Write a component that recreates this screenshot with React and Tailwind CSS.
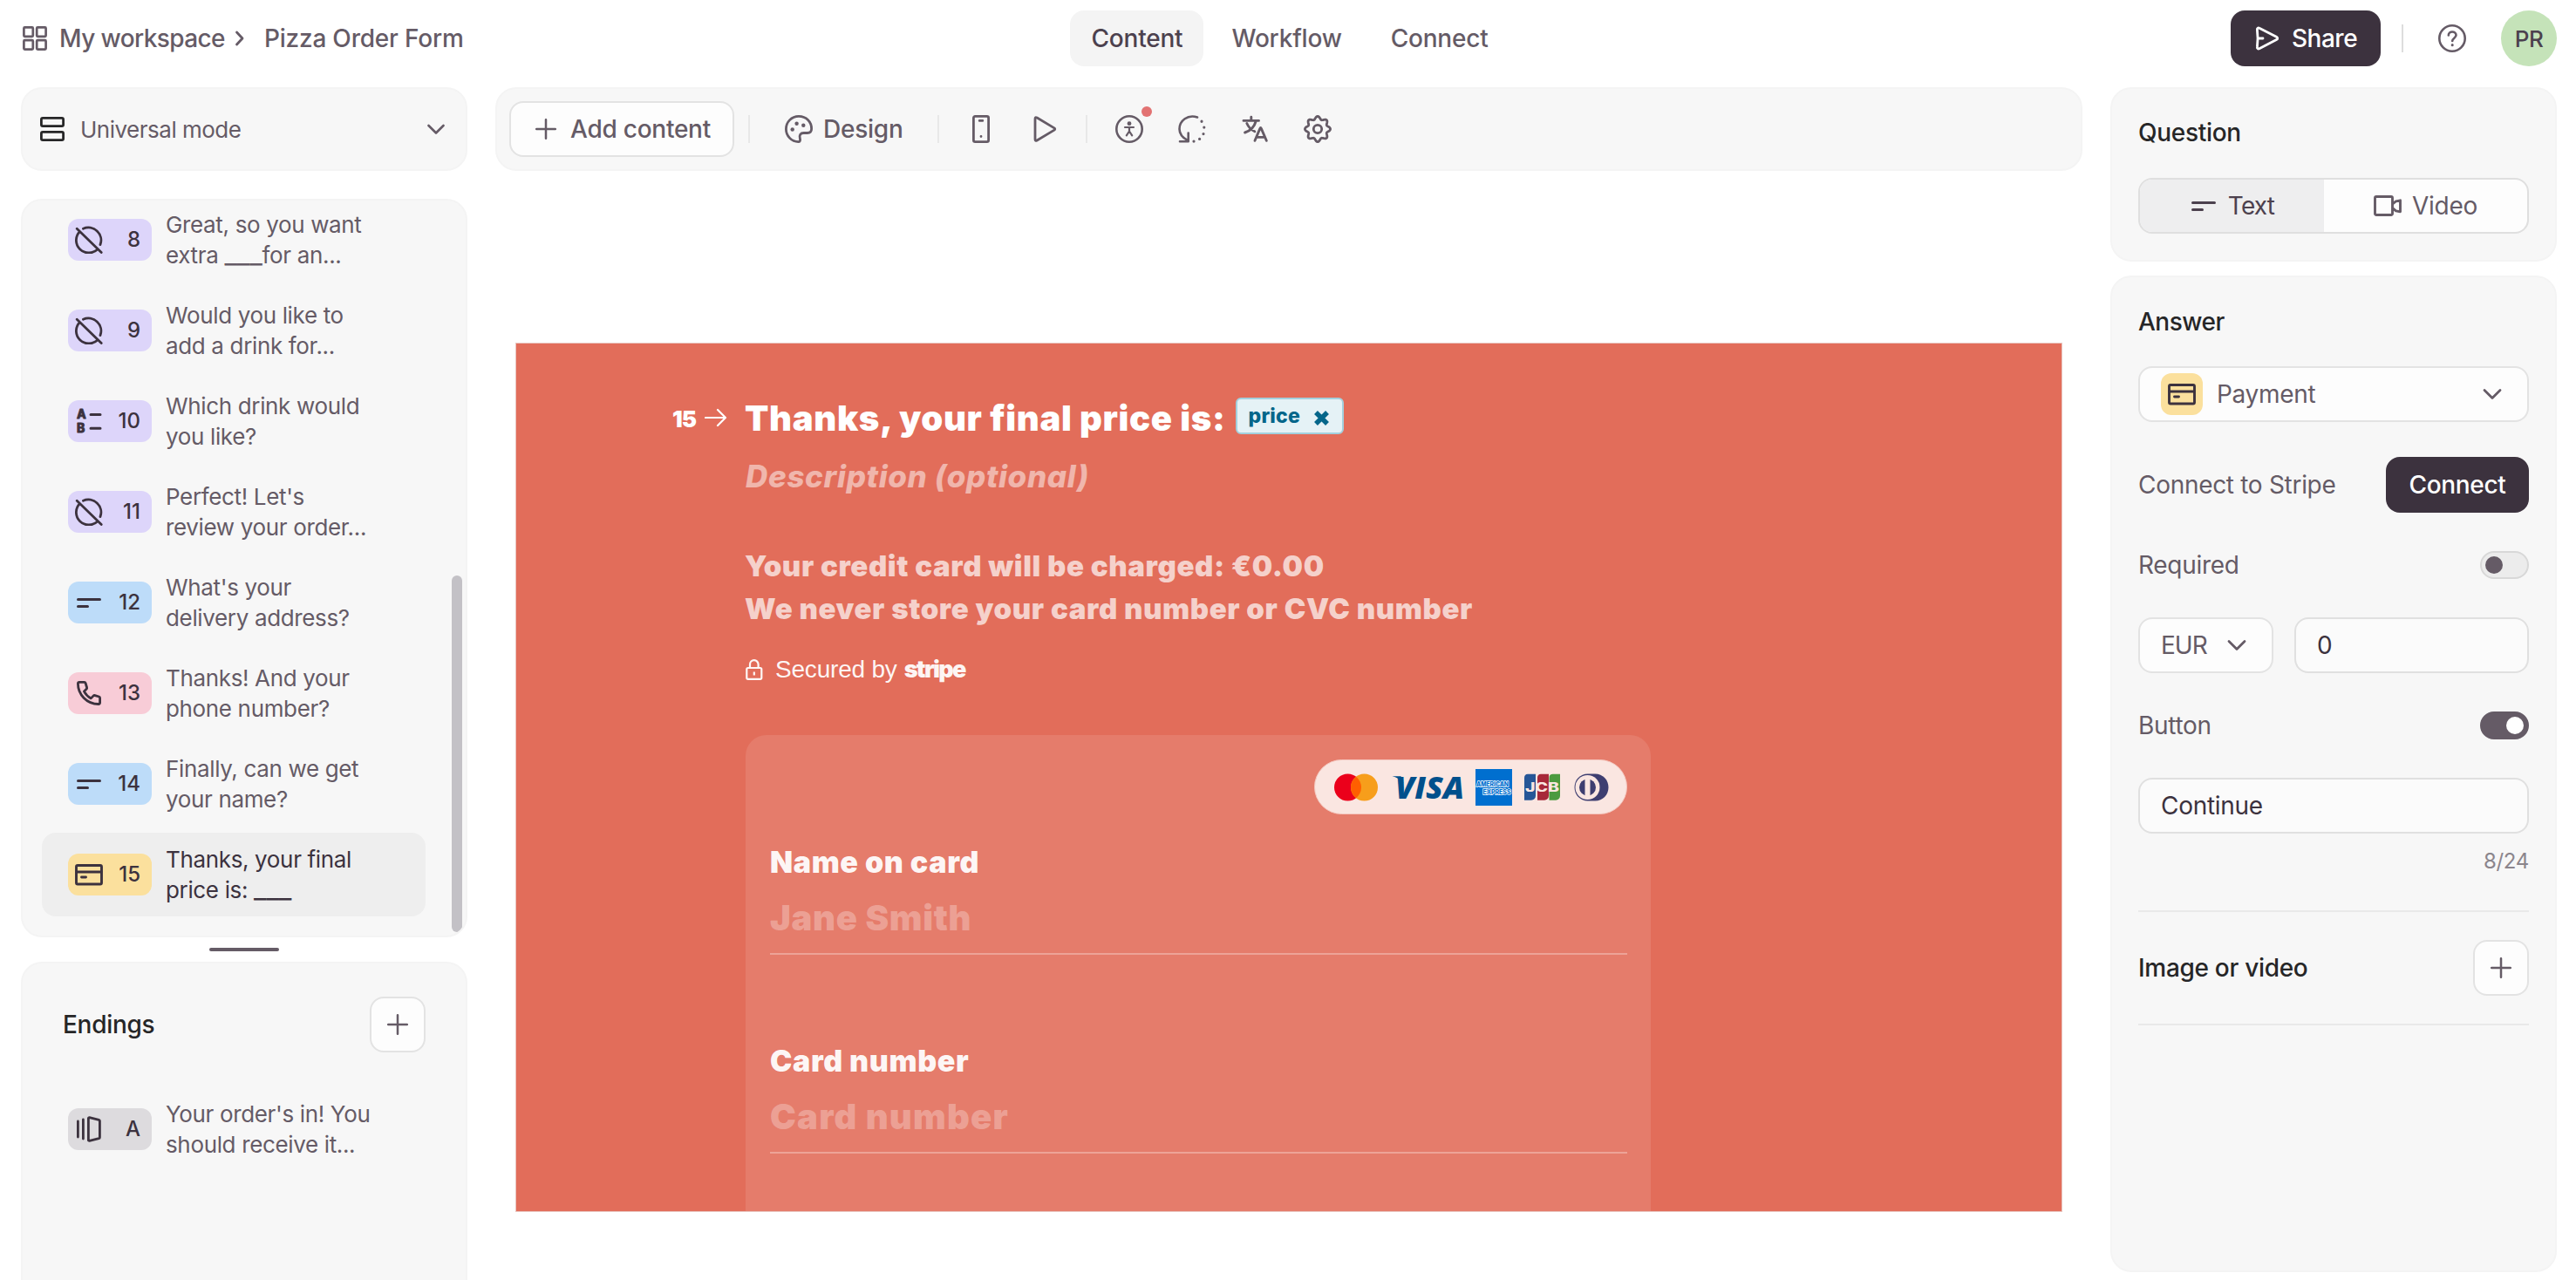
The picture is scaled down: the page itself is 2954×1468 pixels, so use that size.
import React, { useState } from "react";

const Icon = ({ size = 32, className = "", children, width = 2.6 }) => (
  <svg
    width={size}
    height={size}
    viewBox={`0 0 ${size} ${size}`}
    fill="none"
    stroke="currentColor"
    strokeWidth={width}
    strokeLinecap="round"
    strokeLinejoin="round"
    className={"shrink-0 " + className}
  >
    {children}
  </svg>
);

const GridIcon = () => (
  <Icon size={28} width={2.7}>
    <rect x="1.4" y="1.4" width="10.4" height="10.4" rx="1" />
    <rect x="16.2" y="1.4" width="10.4" height="10.4" rx="1" />
    <rect x="1.4" y="16.2" width="10.4" height="10.4" rx="1" />
    <rect x="16.2" y="16.2" width="10.4" height="10.4" rx="1" />
  </Icon>
);

const RowsIcon = () => (
  <Icon size={28} width={2.8} className="text-[#262627]">
    <rect x="1.4" y="1.4" width="25.2" height="9.2" rx="1.6" />
    <rect x="1.4" y="17.4" width="25.2" height="9.2" rx="1.6" />
  </Icon>
);

const ChevronDown = () => (
  <Icon size={28} width={2.8}>
    <path d="M5 9.5l9 9 9-9" />
  </Icon>
);

const PlusIcon = () => (
  <Icon size={24} width={2.5}>
    <path d="M12 1.2v21.6M1.2 12h21.6" />
  </Icon>
);

const StatementIcon = () => (
  <Icon width={2.8}>
    <path d="M2.2 3.2l28 27.2M9.4 3.2A14.6 14.6 0 0 1 29 21.6M5.6 6.4A14.4 14.4 0 0 0 26 26.8" />
  </Icon>
);

const ChoiceIcon = () => (
  <Icon width={3}>
    <g fill="currentColor" stroke="currentColor" strokeWidth="0.8" fontSize="14" fontWeight="800" fontFamily="Inter, sans-serif">
      <text x="2" y="13">A</text>
      <text x="2" y="29">B</text>
    </g>
    <path d="M18 8.4h11M18 24.2h11" />
  </Icon>
);

const TextIcon = () => (
  <Icon width={3}>
    <path d="M3.5 12.5h25M3.5 20.5h11" />
  </Icon>
);

const PhoneIcon = () => (
  <Icon width={2.8}>
    <path d="M5 3.4h5.6c.9 0 1.3.4 1.5 1.1l1.5 5c.2.8 0 1.3-.5 1.8l-2.7 2.6c1.8 3.5 4.3 6.1 7.9 8l2.7-2.8c.6-.6 1.1-.7 1.9-.5l4.600 1.400c.800.300 1.100.800 1.100 1.600v5.200c0 1-.700 1.700-1.700 1.700C13.600 28.500 3.400 17.500 3.400 5c0-.900.600-1.600 1.600-1.600z" />
  </Icon>
);

const CardIcon = () => (
  <Icon width={2.9}>
    <rect x="1.500" y="5.500" width="29" height="21.500" rx="1.500" />
    <path d="M2 13h28M7.500 19h5" />
  </Icon>
);

const EndingIcon = () => (
  <Icon width={2.8}>
    <path d="M3.400 7v18M9.400 5v22M15.400 3.600c0-.800.500-1 1.200-.900l10.800 2.600c.700.200 1 .600 1 1.300v18.800c0 .700-.300 1.100-1 1.300l-10.800 2.600c-.700.100-1.200-.100-1.200-.900z" />
  </Icon>
);

const gearPath =
  Array.from({ length: 97 }, (_, i) => {
    const a = (i / 96) * Math.PI * 2 - Math.PI / 2;
    const r = 12.9 + 1.7 * Math.cos(8 * (a + Math.PI / 2));
    return `${i ? "L" : "M"}${(16 + r * Math.cos(a)).toFixed(2)} ${(16 + r * Math.sin(a)).toFixed(2)}`;
  }).join("") + "Z";

const Separator = ({ className = "bg-[#e8e8e8]" }) => <div className={"h-8 w-[2px] " + className} />;

const SquareButton = () => (
  <button className="flex size-16 items-center justify-center rounded-2xl border-2 border-[#e3e3e3] bg-[#fdfdfd]">
    <PlusIcon />
  </button>
);

// recalled answers show up as a blank in the question title
const Blank = () => <span className="text-[32px] leading-none tracking-[-0.2px]">___</span>;

const tints = {
  purple: "bg-[#ddd5fa]",
  blue: "bg-[#bddcf9]",
  pink: "bg-[#f8ccd7]",
  yellow: "bg-[#fbe09d]",
  grey: "bg-[#dddbde]",
};

const questions = [
  { id: 8, icon: StatementIcon, tint: "purple", lines: ["Great, so you want", <>extra <Blank />for an...</>] },
  { id: 9, icon: StatementIcon, tint: "purple", lines: ["Would you like to", "add a drink for..."] },
  { id: 10, icon: ChoiceIcon, tint: "purple", lines: ["Which drink would", "you like?"] },
  { id: 11, icon: StatementIcon, tint: "purple", lines: ["Perfect! Let's", "review your order..."] },
  { id: 12, icon: TextIcon, tint: "blue", lines: ["What's your", "delivery address?"] },
  { id: 13, icon: PhoneIcon, tint: "pink", lines: ["Thanks! And your", "phone number?"] },
  { id: 14, icon: TextIcon, tint: "blue", lines: ["Finally, can we get", "your name?"] },
  { id: 15, icon: CardIcon, tint: "yellow", lines: ["Thanks, your final", <>price is: <Blank /></>] },
];

const QuestionRow = ({ item, active, onClick }) => {
  const RowIcon = item.icon;
  return (
    <div
      onClick={onClick}
      className={
        "flex h-24 w-[440px] shrink-0 cursor-pointer items-center rounded-2xl pl-[30px] " +
        (active ? "bg-[#eeeeee] text-[#3c323e]" : "")
      }
    >
      <div className={"flex h-12 w-24 items-center justify-between rounded-xl pr-[13px] pl-2 text-[#3c323e] " + tints[item.tint]}>
        <RowIcon />
        <span className="text-[24px] font-medium">{item.id}</span>
      </div>
      <div className="ml-4 text-[26px] leading-[35px] tracking-[-0.35px]">
        <p className="h-[35px]">{item.lines[0]}</p>
        <p className="h-[35px]">{item.lines[1]}</p>
      </div>
    </div>
  );
};

const Header = () => (
  <header className="grid h-[88px] shrink-0 grid-cols-[1fr_auto_1fr] items-center pr-[22px] pl-[26px] text-[28px] font-medium tracking-[-0.2px]">
    <div className="flex items-center">
      <GridIcon />
      <span className="ml-[14px] tracking-[-0.6px]">My workspace</span>
      <Icon size={20} width={2.8} className="ml-[7px]">
        <path d="M6.500 3l6.500 7-6.500 7" />
      </Icon>
      <span className="ml-[18px]">Pizza Order Form</span>
    </div>
    <nav className="flex gap-2">
      <span className="flex h-16 items-center rounded-2xl bg-[#f4f4f4] px-6 text-[#4c414e]">Content</span>
      <span className="flex h-16 items-center px-6">Workflow</span>
      <span className="flex h-16 items-center px-6">Connect</span>
    </nav>
    <div className="flex items-center justify-end">
      <button className="flex h-16 w-[172px] items-center rounded-2xl bg-[#3c323e] pl-7 text-white">
        <Icon size={28} width={2.8}>
          <path d="M2.400 4.200c-.300-1.800 1-2.700 2.500-1.900l19.600 9.900c1.600.800 1.600 2.600 0 3.400L4.900 25.700c-1.500.800-2.800-.100-2.500-1.900.900-6.600.900-13 0-19.600zM4 14h5" />
        </Icon>
        <span className="ml-[14px] tracking-[-0.5px]">Share</span>
      </button>
      <Separator className="ml-6 bg-[#dddddd]" />
      <Icon className="ml-10">
        <circle cx="16" cy="16" r="14.700" />
        <path d="M11.800 12.500c0-5.400 8.700-5.200 8.700-.200 0 3.300-4.300 3.400-4.300 6.700" />
        <path d="M16.200 23.600v.200" strokeWidth="3" />
      </Icon>
      <div className="ml-10 flex size-16 items-center justify-center rounded-full bg-[#c5e3b9] text-[26px] tracking-[-0.6px] text-[#4c414e]">
        PR
      </div>
    </div>
  </header>
);

const Toolbar = () => (
  <div className="flex h-24 shrink-0 items-center rounded-3xl border-2 border-[#f4f4f4] bg-[#f7f7f7] px-[14px] text-[28px] font-medium tracking-[-0.25px]">
    <button className="flex h-16 w-[258px] items-center rounded-2xl border-2 border-[#e3e3e3] bg-[#fdfdfd] pl-7">
      <PlusIcon />
      <span className="ml-4">Add content</span>
    </button>
    <Separator className="ml-4 bg-[#e8e8e8]" />
    <div className="ml-10 flex w-[135px] items-center">
      <Icon width={2.8}>
        <path d="M16 1.400C7.700 1.400 1.400 7.800 1.400 16S8 30.600 15.400 30.600c2 0 2.500-1.700 2-3.400-1.200-4 .500-6.700 4.300-6.700h4.200c3 0 4.700-1.600 4.700-4.700C30.600 7.600 24.500 1.400 16 1.400z" />
        <g fill="currentColor" stroke="none">
          <circle cx="8.700" cy="16.500" r="2.200" />
          <circle cx="13.600" cy="9.800" r="2.200" />
          <circle cx="21.300" cy="11.800" r="2.200" />
        </g>
      </Icon>
      <span className="ml-3">Design</span>
    </div>
    <Separator className="ml-10 bg-[#e8e8e8]" />
    <Icon className="ml-8" width={2.8}>
      <rect x="7.400" y="1.400" width="17.200" height="29.200" rx="1.800" />
      <path d="M14.200 6.400h3.600M16 24.500v.100" />
    </Icon>
    <Icon className="ml-[42px]" width={2.8}>
      <path d="M4 4.200q0-2.500 2.200-1.200L26 14.900q1.500 1.100 0 2.200L6.200 29Q4 30.300 4 27.800z" />
    </Icon>
    <Separator className="ml-[30px] bg-[#e8e8e8]" />
    <div className="relative ml-8">
      <Icon>
        <circle cx="16" cy="16" r="14.700" />
        <circle cx="16" cy="9.700" r="2.400" fill="currentColor" stroke="none" />
        <path d="M11 14h10M16 14.500v4.500M16 18.500l-3.200 4.900M16 18.500l3.200 4.900" strokeWidth="2.200" />
      </Icon>
      <span className="absolute -top-[10px] left-[30px] size-3 rounded-full bg-[#e27272]" />
    </div>
    <Icon className="ml-10">
      <path d="M22 2.500C11-1.200 1.500 6.500 1.500 16c0 5 2.600 9.400 9.500 13.200M2 30.200h9.700V20.500" />
      <path d="M27 7.200v.100M29.800 14v.100M29 21.500v.100M24.600 27.300v.100M18 30v.100" strokeWidth="3.200" />
    </Icon>
    <Icon className="ml-10" width={2.9}>
      <path d="M3 6.400h17.500M11.800 2.200v4M17.200 7C15.500 13 11 18 4.600 20M6.800 9.500c1.800 4 5 7.500 9 9.300M16 29.300l6-14.200c.300-.800.900-.800 1.200 0L29.300 29.300M18.500 25.400h8.500" />
    </Icon>
    <Icon className="ml-10" width={2.8}>
      <path d={gearPath} />
      <circle cx="16" cy="16" r="4.700" />
    </Icon>
  </div>
);

const CardBrands = () => (
  <div className="flex h-[63px] w-[359px] items-center rounded-full border border-[#f4c8c0] bg-[#fae6e1] pl-[22px]">
    <svg width="50" height="32" viewBox="0 0 50 32" className="shrink-0">
      <circle cx="15.500" cy="16" r="15.500" fill="#eb001b" />
      <circle cx="34.500" cy="16" r="15.500" fill="#f79e1b" />
      <path d="M25 3.750a15.500 15.500 0 0 1 0 24.500 15.500 15.500 0 0 1 0-24.500z" fill="#ff5f00" />
    </svg>
    <svg width="82" height="50" viewBox="0 -9 82 50" className="ml-4 shrink-0 overflow-visible">
      <path d="M.5 3.300h10l3 8C10 7 5 4.300.500 3.300z" fill="#00508c" />
      <text
        x="4"
        y="28.500"
        textLength="79"
        lengthAdjust="spacingAndGlyphs"
        fill="#00508c"
        fontFamily="Open Sans, sans-serif"
        fontStyle="italic"
        fontWeight="800"
        fontSize="35"
      >
        VISA
      </text>
    </svg>
    <svg width="42" height="42" viewBox="0 0 42 42" className="ml-[14px] shrink-0 overflow-visible">
      <rect width="42" height="42" fill="#006fcf" />
      <g fill="#006fcf" stroke="#fff" strokeWidth="1.500" paintOrder="stroke" fontFamily="Inter, sans-serif" fontWeight="800" fontSize="7.500">
        <text x="1" y="20" textLength="37" lengthAdjust="spacingAndGlyphs">AMERICAN</text>
        <text x="8.500" y="28.600" textLength="32" lengthAdjust="spacingAndGlyphs">EXPRESS</text>
      </g>
    </svg>
    <svg width="41" height="32" viewBox="0 0 41 32" className="ml-[14px] shrink-0">
      <path d="M4 .800h9v25a5 5 0 0 1-5 5H0V5a4.200 4.200 0 0 1 4-4.200z" fill="#265697" />
      <path d="M19 .800h9v25a5 5 0 0 1-5 5h-8V5a4.200 4.200 0 0 1 4-4.200z" fill="#a72839" />
      <path d="M32.500.800H41v25a5 5 0 0 1-5 5h-7.500V5a4.200 4.200 0 0 1 4-4.200z" fill="#4c9a3f" />
      <text x="1" y="21" textLength="39" lengthAdjust="spacingAndGlyphs" fill="#fae6e1" fontFamily="Inter, sans-serif" fontWeight="800" fontSize="14">
        JCB
      </text>
    </svg>
    <svg width="40" height="32" viewBox="0 0 40 32" className="ml-4 shrink-0">
      <path d="M15.700.500h8.500C33 .500 39.500 7.500 39.500 16S33 31.500 24.200 31.500h-8.500C7 31.500.500 24.500.500 16S7 .500 15.700.500z" fill="#3e3e70" />
      <circle cx="15.500" cy="16" r="14" fill="#fae6e1" />
      <circle cx="15.500" cy="16" r="9.500" fill="#3e3e70" />
      <rect x="12.500" y="5.500" width="6" height="21" fill="#fae6e1" />
    </svg>
  </div>
);

const Canvas = () => (
  <div className="mt-[197px] ml-[23px] flex h-[997px] w-[1774px] flex-col overflow-hidden border border-[#e9c5bf] bg-[#e26d5a] text-white">
    <div className="mt-[62px] flex h-12 shrink-0 items-center pl-[179px]">
      <div className="flex w-[83px] items-center">
        <span className="w-[37px] text-[26px] font-black tracking-[-1px]">15</span>
        <Icon size={26} width={2.2} className="-mt-[3px]">
          <path d="M1 13h23M15 4l9 9-9 9" />
        </Icon>
      </div>
      <h1 className="text-[40px] font-black tracking-[0.65px]">Thanks, your final price is:</h1>
      <div className="ml-[11px] flex h-[42px] w-[124px] items-center self-start rounded-md border-2 border-[#a3d0dd] bg-[#e5f2f6] pl-[13px] text-[#04668a]">
        <span className="w-[75px] text-[23px] leading-none font-extrabold tracking-[0.2px]">price</span>
        <svg width="17" height="17" viewBox="0 0 17 17" stroke="currentColor" strokeWidth="5.500" className="mt-[5px]">
          <path d="M2 2l13 13M15 2L2 15" />
        </svg>
      </div>
    </div>
    <div className="flex min-h-0 flex-1 flex-col pl-[263px]">
      <p className="mt-[18px] h-12 text-[35px] leading-[48px] font-extrabold tracking-[0.65px] text-white/50 italic">
        Description (optional)
      </p>
      <p className="-ml-px mt-[55px] text-[33px] leading-[49px] font-black tracking-[0.6px] text-white/70">
        Your credit card will be charged: €0.00
        <br />
        We never store your card number or CVC number
      </p>
      <div className="mt-[29px] flex h-8 items-center text-white/95">
        <svg width="20" height="24" viewBox="0 0 20 24" fill="none" stroke="currentColor" strokeWidth="2.200">
          <rect x="1.300" y="10" width="17" height="12.800" rx="1.500" />
          <path d="M5 10V6a4.800 4.800 0 0 1 9.600 0v4M9.800 14.500v4" />
        </svg>
        <span className="ml-[14px] font-['Liberation_Sans',sans-serif] text-[28px] tracking-[-0.2px]">Secured by</span>
        <span className="ml-2 text-[27px] font-black tracking-[-1.7px]">stripe</span>
      </div>
      <div className="mt-[59px] flex min-h-0 w-[1038px] flex-1 flex-col rounded-t-3xl bg-white/10 pt-[28px] pr-[27px] pl-7">
        <div className="flex justify-end">
          <CardBrands />
        </div>
        <p className="mt-[35px] text-[34px] leading-[40px] font-black tracking-[0.6px] text-white/95">Name on card</p>
        <p className="mt-[20px] h-[66px] shrink-0 border-b-2 border-white/30 text-[40px] leading-[48px] font-black tracking-[0.7px] text-white/30">
          Jane Smith
        </p>
        <p className="mt-[102px] text-[34px] leading-[40px] font-black tracking-[0.6px] text-white/95">Card number</p>
        <p className="mt-[20px] h-[66px] shrink-0 border-b-2 border-white/30 text-[40px] leading-[48px] font-black tracking-[1.2px] text-white/30">
          Card number
        </p>
      </div>
    </div>
  </div>
);

const Toggle = ({ on, onClick }) => (
  <button
    onClick={onClick}
    className={
      "flex h-8 w-14 items-center rounded-full border-2 px-[4px] " +
      (on ? "justify-end border-[#655b66] bg-[#655b66]" : "border-[#d8d8d8] bg-[#ececec]")
    }
  >
    <span className={"size-5 rounded-full " + (on ? "bg-white" : "bg-[#655b66]")} />
  </button>
);

const Settings = () => {
  const [required, setRequired] = useState(false);
  const [button, setButton] = useState(true);
  return (
    <aside className="flex w-[512px] shrink-0 flex-col gap-4 pb-[9px] text-[28px] tracking-[-0.3px]">
      <section className="h-[200px] shrink-0 rounded-3xl border-2 border-[#f4f4f4] bg-[#f7f7f7] px-[30px] pt-[30px]">
        <h2 className="h-10 leading-10 font-medium text-[#262627]">Question</h2>
        <div className="mt-8 flex h-16 overflow-hidden rounded-2xl border-2 border-[#dfdfdf] bg-[#fdfdfd]">
          <div className="flex w-[211px] items-center justify-center gap-3 bg-[#eeeeef] text-[#4c414e]">
            <TextIcon />
            <span className="tracking-[-0.8px]">Text</span>
          </div>
          <div className="flex flex-1 items-center justify-center gap-3">
            <Icon width={2.9}>
              <path d="M3 5.500h17a1.500 1.500 0 0 1 1.500 1.500v18a1.500 1.500 0 0 1-1.500 1.500H3A1.500 1.500 0 0 1 1.500 25V7A1.500 1.500 0 0 1 3 5.500zM22 13.600l3.500-2.800 5-1v13l-5-1-3.500-2.800" />
            </Icon>
            <span>Video</span>
          </div>
        </div>
      </section>
      <section className="flex flex-1 flex-col rounded-3xl border-2 border-[#f4f4f4] bg-[#f7f7f7] px-[30px] pt-[31px]">
        <h2 className="h-10 leading-10 font-medium tracking-[-0.5px] text-[#262627]">Answer</h2>
        <div className="mt-[31px] flex h-16 items-center rounded-2xl border-2 border-[#e3e3e3] bg-[#fdfdfd] pr-[26px] pl-6">
          <div className="flex size-12 items-center justify-center rounded-xl bg-[#fbe09d] text-[#3c323e]">
            <CardIcon />
          </div>
          <span className="ml-4 flex-1">Payment</span>
          <ChevronDown />
        </div>
        <div className="mt-10 flex items-center justify-between">
          <span>Connect to Stripe</span>
          <button className="h-16 w-[164px] rounded-2xl bg-[#3c323e] font-medium text-white">Connect</button>
        </div>
        <div className="mt-11 flex h-8 items-center justify-between">
          <span>Required</span>
          <Toggle on={required} onClick={() => setRequired(!required)} />
        </div>
        <div className="mt-11 flex gap-6">
          <div className="flex h-16 w-[155px] items-center justify-between rounded-2xl border-2 border-[#e3e3e3] bg-[#fdfdfd] pr-[26px] pl-6">
            <span className="tracking-[-1px]">EUR</span>
            <ChevronDown />
          </div>
          <div className="flex h-16 flex-1 items-center rounded-2xl border-2 border-[#e0e0e0] bg-[#fbfbfb] px-6 text-[#3c323e]">0</div>
        </div>
        <div className="mt-11 flex h-8 items-center justify-between">
          <span>Button</span>
          <Toggle on={button} onClick={() => setButton(!button)} />
        </div>
        <div className="mt-11 flex h-16 items-center rounded-2xl border-2 border-[#e0e0e0] bg-[#fbfbfb] px-6 text-[#3c323e]">Continue</div>
        <p className="mt-4 h-8 text-right text-[24px] leading-8 text-[#8b858c]">8/24</p>
        <div className="mt-10 flex h-[132px] items-center justify-between border-y-2 border-[#e9e9e9]">
          <h2 className="font-medium text-[#262627]">Image or video</h2>
          <SquareButton />
        </div>
      </section>
    </aside>
  );
};

const App = () => {
  const [active, setActive] = useState(15);
  return (
    <div className="flex h-[1468px] w-full flex-col overflow-hidden bg-white font-['Inter',sans-serif] text-[#655b66]">
      <Header />
      <main className="flex min-h-0 flex-1 gap-8 pt-3 pr-[22px] pl-6">
        <aside className="flex w-[512px] shrink-0 flex-col">
          <div className="flex h-24 shrink-0 items-center rounded-3xl border-2 border-[#f4f4f4] bg-[#f7f7f7] pr-[20px] pl-5">
            <RowsIcon />
            <span className="ml-[18px] flex-1 text-[26px] tracking-[-0.5px]">Universal mode</span>
            <Icon size={28} width={2.6}>
              <path d="M5.500 10l8.500 8.500 8.500-8.500" />
            </Icon>
          </div>
          <div className="mt-8 flex h-[847px] shrink-0 justify-between overflow-hidden rounded-3xl border-2 border-[#f4f4f4] bg-[#f7f7f7] pr-1 pl-[22px]">
            <div className="-mt-[3px] flex flex-col gap-2">
              {questions.map((q) => (
                <QuestionRow key={q.id} item={q} active={q.id === active} onClick={() => setActive(q.id)} />
              ))}
            </div>
            <div className="mt-[430px] h-[409px] w-3 rounded-full bg-[#c3c1c6]" />
          </div>
          <div className="mx-auto mt-3 h-1 w-20 shrink-0 rounded-full bg-[#655b66]" />
          <div className="mt-3 flex-1 rounded-t-3xl border-2 border-b-0 border-[#f4f4f4] bg-[#f7f7f7] pt-[38px] pr-[46px] pl-[22px]">
            <div className="flex items-center justify-between pl-6">
              <h2 className="text-[28px] font-medium tracking-[-0.3px] text-[#262627]">Endings</h2>
              <SquareButton />
            </div>
            <div className="mt-10">
              <QuestionRow item={{ id: "A", icon: EndingIcon, tint: "grey", lines: ["Your order's in! You", "should receive it..."] }} />
            </div>
          </div>
        </aside>
        <div className="flex min-w-0 flex-1 flex-col">
          <Toolbar />
          <Canvas />
        </div>
        <Settings />
      </main>
    </div>
  );
};

export default App;
